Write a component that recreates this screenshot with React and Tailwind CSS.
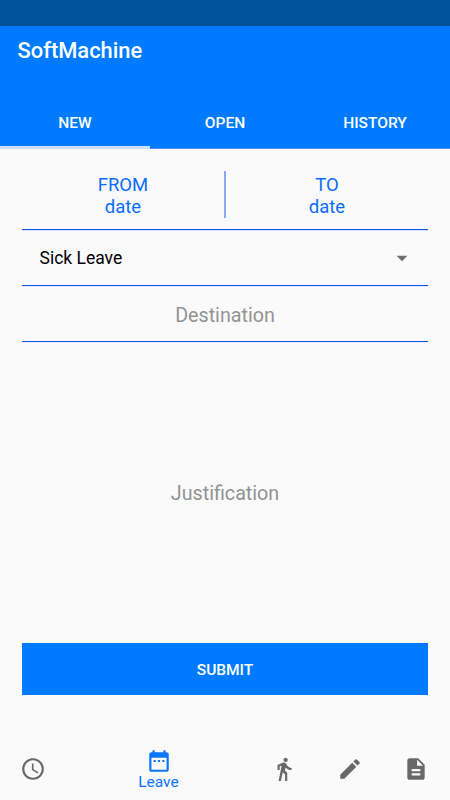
import { useState } from "react";
import {
  MdAccessTime,
  MdArrowDropDown,
  MdDateRange,
  MdDescription,
  MdDirectionsWalk,
  MdEdit,
} from "react-icons/md";

const tabs = ["NEW", "OPEN", "HISTORY"];

const navItems = [
  { name: "Clock", icon: MdAccessTime },
  { name: "Leave", icon: MdDateRange },
  { name: "Walk", icon: MdDirectionsWalk },
  { name: "Edit", icon: MdEdit },
  { name: "Report", icon: MdDescription },
];

const Header = ({ activeTab, onChange }) => (
  <header className="bg-[#007bff] text-white">
    <div className="h-[26px] bg-[#00529c]" />
    <h1 className="h-[72px] px-[17.5px] pt-[9px] text-[21.9px] leading-8 font-medium">SoftMachine</h1>
    <div className="flex h-[51px] border-b border-[#4a92fb]">
      {tabs.map((tab) => (
        <button
          key={tab}
          type="button"
          className={`-mb-px flex-1 border-b-[3px] pt-1 text-[15.5px] font-medium ${
            activeTab === tab ? "border-[#cce0ff]" : "border-transparent"
          }`}
          onClick={() => onChange(tab)}
        >
          {tab}
        </button>
      ))}
    </div>
  </header>
);

const DateButton = ({ label }) => (
  <button type="button" className="flex-1 pt-[3px] text-[18.5px] leading-[22px] text-[#0a6cff]">
    {label}
    <br />
    date
  </button>
);

const LeaveForm = () => (
  <form className="flex flex-1 flex-col px-[22px]" onSubmit={(e) => e.preventDefault()}>
    <div className="flex h-[81px] items-center border-b border-[#0f58ee] pt-[10px] shadow-[0_1px_0_#d4e2fd]">
      <DateButton label="FROM" />
      <div className="h-[47px] w-[2px] bg-[#86a9fb]" />
      <DateButton label="TO" />
    </div>
    <button
      type="button"
      className="flex h-14 items-center justify-between border-b border-[#0f52ee] pr-[13px] pl-[17.5px] text-[17.5px] text-black shadow-[0_1px_0_#e0eafd]"
    >
      <span className="pt-[2px]">Sick Leave</span>
      <MdArrowDropDown className="size-[26px] text-[#6e6e6e]" />
    </button>
    <input
      className="h-14 border-b border-[#0f52ee] pt-[3px] text-center text-[19.7px] shadow-[0_1px_0_#e8effd] outline-none placeholder:text-[#939393]"
      placeholder="Destination"
    />
    <div className="flex flex-1 items-center pt-[2px]">
      <input
        className="w-full text-center text-[19.7px] outline-none placeholder:text-[#939393]"
        placeholder="Justification"
      />
    </div>
    <button
      type="submit"
      className="h-[52px] bg-[#007bff] pt-[3px] text-[15.5px] font-medium text-white"
    >
      SUBMIT
    </button>
  </form>
);

const BottomNav = ({ active, onChange }) => (
  <nav className="mt-[44px] flex h-[61px] pr-px">
    {navItems.map(({ name, icon: Icon }) => (
      <button
        key={name}
        type="button"
        aria-label={name}
        className={`flex flex-col items-center ${
          active === name
            ? "flex-1 pt-[9px] text-[#0a75ff]"
            : "w-[66px] pt-[17px] text-[#686868]"
        }`}
        onClick={() => onChange(name)}
      >
        <Icon className="size-[26px]" />
        {active === name && <span className="-mt-[2px] text-[15.5px] leading-5">{name}</span>}
      </button>
    ))}
  </nav>
);

const App = () => {
  const [activeTab, setActiveTab] = useState("NEW");
  const [activeNav, setActiveNav] = useState("Leave");

  return (
    <div className="flex h-[800px] w-[450px] flex-col overflow-hidden bg-[#fafafa] font-[Roboto,sans-serif]">
      <Header activeTab={activeTab} onChange={setActiveTab} />
      <LeaveForm />
      <BottomNav active={activeNav} onChange={setActiveNav} />
    </div>
  );
};

export default App;
